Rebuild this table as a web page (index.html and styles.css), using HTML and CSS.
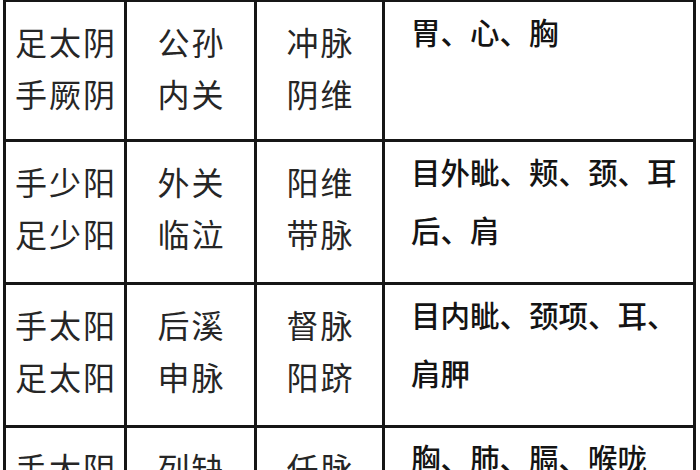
FILE: index.html
```html
<!DOCTYPE html>
<html lang="zh-CN">
<head>
<meta charset="utf-8">
<title>八脉交会穴</title>
<link rel="stylesheet" href="styles.css">
</head>
<body>
<div class="table">
  <div class="cell c1">足太阴<br>手厥阴</div>
  <div class="cell c2">公孙<br>内关</div>
  <div class="cell c3">冲脉<br>阴维</div>
  <div class="cell c4">胃、心、胸</div>

  <div class="cell c1">手少阳<br>足少阳</div>
  <div class="cell c2">外关<br>临泣</div>
  <div class="cell c3">阳维<br>带脉</div>
  <div class="cell c4">目外眦、颊、颈、耳<br>后、肩</div>

  <div class="cell c1">手太阳<br>足太阳</div>
  <div class="cell c2">后溪<br>申脉</div>
  <div class="cell c3">督脉<br>阳跻</div>
  <div class="cell c4">目内眦、颈项、耳、<br>肩胛</div>

  <div class="cell c1">手太阴<br>足少阴</div>
  <div class="cell c2">列缺<br>照海</div>
  <div class="cell c3">任脉<br>阴跻</div>
  <div class="cell c4">胸、肺、膈、喉咙</div>
</div>
</body>
</html>
```

FILE: styles.css
```css
html, body {
  margin: 0;
  padding: 0;
  background: #ffffff;
  overflow: hidden;
}

body {
  width: 700px;
  height: 470px;
  font-family: "Noto Sans CJK SC", "Noto Sans", sans-serif;
}

.table {
  display: grid;
  grid-template-columns: 121px 130px 128px 311px;
  grid-template-rows: 140px 143px 143px 143px;
  margin-left: 3px;
  width: 690px;
  border-left: 3px solid #161616;
  border-top: 2px solid #161616;
}

.cell {
  box-sizing: border-box;
  border-right: 3px solid #161616;
  border-bottom: 3px solid #161616;
  color: #262626;
}

.c1, .c2, .c3 {
  font-size: 32px;
  line-height: 52px;
  letter-spacing: 2px;
  text-align: center;
  padding-top: 13px;
  padding-left: 2px;
  font-weight: 400;
}

.c4 {
  font-size: 29.5px;
  line-height: 58px;
  padding-top: 0;
  padding-left: 26px;
  font-weight: 500;
  color: #141414;
}
```
